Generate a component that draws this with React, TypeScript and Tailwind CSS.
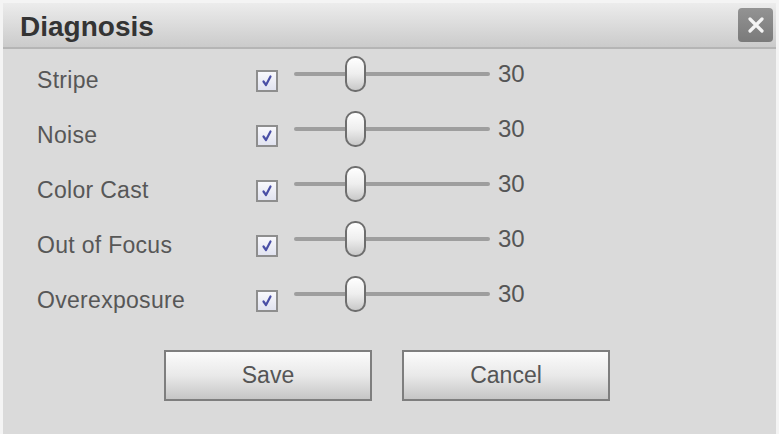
import React from "react";

const rows = ["Stripe", "Noise", "Color Cast", "Out of Focus", "Overexposure"];

function Check() {
  return (
    <div className="w-[22px] h-[22px] border-2 border-[#8e8e8e] bg-gradient-to-b from-[#f8f8fc] to-[#e1e3f0] flex items-center justify-center">
      <svg width="14" height="14" viewBox="0 0 14 14">
        <path d="M3.5 7.5 L6 11 L10.5 2.5" fill="none" stroke="#4a4fa6" strokeWidth="2.2" strokeLinecap="round" strokeLinejoin="round" />
      </svg>
    </div>
  );
}

function Slider() {
  return (
    <div className="flex items-center mb-[14px]">
      <div className="relative w-[196px] h-[36px] flex items-center">
        <div className="w-full h-[4px] rounded-full bg-[#9e9e9e]" />
        <div className="absolute left-[51px] top-0 w-[21px] h-[36px] rounded-[10px] border-2 border-[#6e6e6e] bg-gradient-to-b from-[#ffffff] via-[#eeeeee] to-[#c9c9c9]" />
      </div>
      <span className="ml-[8px] text-[24px] text-[#555555] leading-none">30</span>
    </div>
  );
}

export default function App() {
  return (
    <div className="w-[779px] h-[434px] bg-[#f4f4f4] px-[3px] pt-[3px] overflow-hidden" style={{ fontFamily: '"Liberation Sans", Arial, sans-serif' }}>
      <div className="h-full flex flex-col bg-[#dadada]">
        <div className="h-[46px] flex items-center justify-between pl-[17px] pr-[3px] bg-gradient-to-b from-[#ececec] to-[#cbcbcb] border-b-2 border-[#b5b5b5]">
          <span className="text-[28px] font-bold text-[#343434] leading-none mt-[3px]">Diagnosis</span>
          <div className="w-[35px] h-[34px] rounded-[4px] bg-gradient-to-b from-[#939393] to-[#7a7a7a] flex items-center justify-center">
            <svg width="20" height="20" viewBox="0 0 20 20">
              <path d="M4 4 L16 16 M16 4 L4 16" stroke="#f4f4f4" strokeWidth="3.2" strokeLinecap="round" />
            </svg>
          </div>
        </div>
        <div className="pt-[4px] pl-[34px]">
          {rows.map((r) => (
            <div key={r} className="h-[55px] flex items-center">
              <span className="w-[219px] text-[23px] tracking-[0.3px] text-[#575757] leading-none">{r}</span>
              <Check />
              <div className="ml-[16px]">
                <Slider />
              </div>
            </div>
          ))}
        </div>
        <div className="mt-[22px] flex justify-center gap-[30px] pr-[5px]">
          {["Save", "Cancel"].map((b) => (
            <button key={b} className="w-[208px] h-[51px] border-2 border-[#7e7e7e] bg-gradient-to-b from-[#fbfbfb] via-[#e9e9e9] to-[#c6c6c6] text-[23px] text-[#555555]">
              {b}
            </button>
          ))}
        </div>
      </div>
    </div>
  );
}
